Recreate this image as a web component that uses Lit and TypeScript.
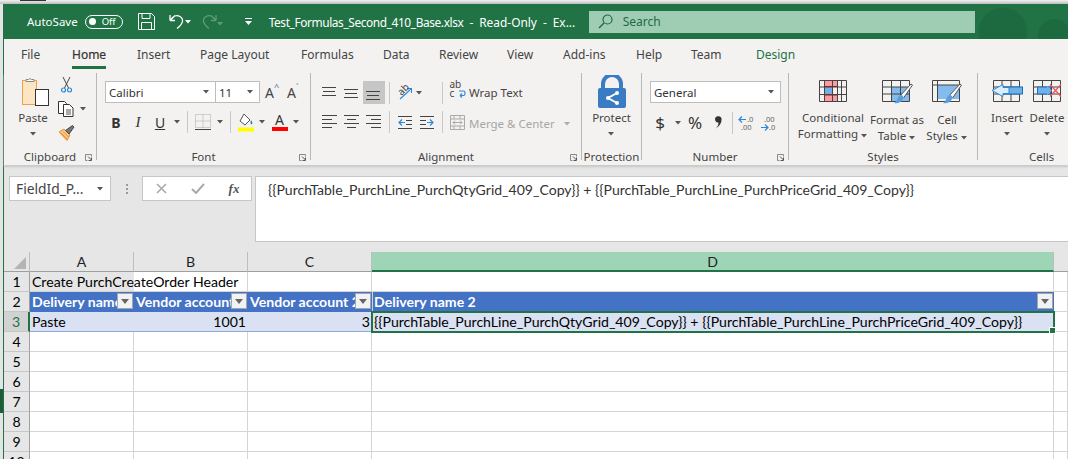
import { LitElement, html, css } from 'lit'
import { customElement } from 'lit/decorators.js'

const caret = html`<svg class="caret" width="7" height="4" viewBox="0 0 7 4"><path d="M0 0h6L3 3.5z" fill="#555" /></svg>`
const launcher = html`<svg class="launcher" width="8" height="7" viewBox="0 0 8 7"><path d="M.5 .5h6v2M.5 .5v6h2" fill="none" stroke="#888" /><path d="M3 2.5l3.5 3.5M6.5 3.5v3h-3" fill="none" stroke="#555" /></svg>`
const sep = html`<span class="vsep"></span>`

const alignLines = (rows: number[][], y0: number) => html`<svg width="16" height="14" viewBox="0 0 16 14">
  ${rows.map(
    (r, i) => html`<svg><rect x=${r[0]} y=${y0 + i * 4} width=${r[1]} height="1" fill="#444" /></svg>`
  )}
</svg>`

// tab name and the x where its text starts, relative to the strip
const tabs: [string, number][] = [
  ['File', 17],
  ['Home', 68],
  ['Insert', 133],
  ['Page Layout', 196],
  ['Formulas', 297],
  ['Data', 379],
  ['Review', 435],
  ['View', 503],
  ['Add-ins', 559],
  ['Help', 632],
  ['Team', 687],
  ['Design', 752],
  ['', 800],
]

const icons = {
  save: html`<svg width="17" height="17" viewBox="0 0 17 17"><path d="M.5 .5h13l3 3v13H.5zM4 .5v5h8v-5M3.5 16.5v-7h10v7" fill="none" stroke="#fff" /></svg>`,
  undo: html`<svg width="16" height="17" viewBox="0 0 16 17"><path d="M1 7.500l5-5M1 7.500h5M1 2v5.500M1.500 7C4 2.500 8 2 11 3.500c4 2.500 3.500 7-3 12" fill="none" stroke="#fff" stroke-width="1.300" /></svg>`,
  redo: html`<svg width="16" height="17" viewBox="0 0 16 17"><path d="M15 7.500l-5-5M15 7.500h-5M15 2v5.500M14.500 7C12 2.500 8 2 5 3.500c-4 2.500-3.500 7 3 12" fill="none" stroke="#5f9b7b" stroke-width="1.300" /></svg>`,
  qat: html`<svg width="7" height="8" viewBox="0 0 7 8"><path d="M0 0h7v1H0zM0 3h7L3.500 7z" fill="#fff" /></svg>`,
  search: html`<svg width="15" height="15" viewBox="0 0 15 15"><circle cx="9.500" cy="5.500" r="4.500" fill="none" stroke="#1f6b42" stroke-width="1.200" /><path d="M6 9l-5 5" stroke="#1f6b42" stroke-width="1.400" /></svg>`,
  paste: html`<svg width="28" height="30" viewBox="0 0 28 30">
    <rect x=".5" y="3.500" width="14" height="24" fill="#fce5c2" stroke="#eda343" />
    <path d="M4 4.500V2.500h2.500a2 2 0 0 1 3 0h2.500v2z" fill="#fff" stroke="#888" />
    <rect x="13.500" y="12.500" width="13" height="16" fill="#fff" stroke="#333" />
  </svg>`,
  scissors: html`<svg width="11" height="16" viewBox="0 0 11 16">
    <path d="M2 0l5.500 11M9 0L3.500 11" stroke="#444" fill="none" />
    <circle cx="2.500" cy="13" r="2" fill="none" stroke="#2b88d8" stroke-width="1.200" />
    <circle cx="8.500" cy="13" r="2" fill="none" stroke="#2b88d8" stroke-width="1.200" />
  </svg>`,
  copy: html`<svg width="16" height="16" viewBox="0 0 16 16">
    <path d="M.5 .5h6l2 2v10H.5z" fill="#fff" stroke="#333" />
    <path d="M5.500 3.500h6l3.500 3.500v8.500H5.500z" fill="#fff" stroke="#333" />
    <path d="M8 9h5M8 11h5M8 13h5" stroke="#555" />
  </svg>`,
  brush: html`<svg width="17" height="16" viewBox="0 0 17 16">
    <path d="M1 7l5-3 6 6-3 5.500z" fill="#f8c78c" stroke="#e8912d" />
    <path d="M3 8l6 6M5 6.500l5.500 5.500" stroke="#e8912d" />
    <path d="M7.500 5.500l7-5 1.500 1.500-5 7z" fill="#777" stroke="#444" />
  </svg>`,
  borders: html`<svg width="16" height="16" viewBox="0 0 16 16">
    <path d="M.5 .5h15v13H.5zM8 .5v13M.5 7h15" fill="none" stroke="#aaa" stroke-dasharray="1 1" />
    <path d="M0 15.500h16" stroke="#444" />
  </svg>`,
  fill: html`<svg width="16" height="19" viewBox="0 0 16 19">
    <path d="M6 1l6 6-5 5-5-4z" fill="#fff" stroke="#555" />
    <path d="M13 7c1 2 2 3 1 4s-2-1-1-4z" fill="#2b6fb5" />
    <rect y="14.500" width="16" height="4" fill="#ffff00" />
  </svg>`,
  orient: html`<svg width="16" height="16" viewBox="0 0 16 16">
    <path d="M1 13l11-10M8 2.500h4.500V7" fill="none" stroke="#2b88d8" stroke-width="1.100" transform="translate(3 1)" />
  </svg>`,
  wrap: html`<svg width="16" height="17" viewBox="0 0 16 17">
    <path d="M10 12.500h3.500c2 0 2-4.500 0-4.500H9M10 12.500l2-2M10 12.500l2 2" fill="none" stroke="#2b88d8" stroke-width="1.100" />
  </svg>`,
  indentL: html`<svg width="14" height="13" viewBox="0 0 14 13"><path d="M0 .5h14M8 4.500h6M8 8.500h6M0 12.500h14" stroke="#444" /><path d="M1 6.500h6M4 3.500l-3 3 3 3" fill="none" stroke="#2b88d8" stroke-width="1.200" /></svg>`,
  indentR: html`<svg width="14" height="13" viewBox="0 0 14 13"><path d="M0 .5h14M0 4.500h6M0 8.500h6M0 12.500h14" stroke="#444" /><path d="M7 6.500h6M10 3.500l3 3-3 3" fill="none" stroke="#2b88d8" stroke-width="1.200" /></svg>`,
  merge: html`<svg width="15" height="15" viewBox="0 0 15 15">
    <path d="M.5 .5h14v14H.5zM.5 4h14M.5 11h14M4 .5V4M10 .5V4M4 11v3.500M10 11v3.500" fill="none" stroke="#aaa" />
    <path d="M3 7.500h9M5 5.500l-2 2 2 2M10 5.500l2 2-2 2" fill="none" stroke="#aaa" />
  </svg>`,
  lock: html`<svg width="28" height="33" viewBox="0 0 28 33">
    <path d="M5 14V9a9 9 0 0 1 18 0v5" fill="none" stroke="#3a7cc3" stroke-width="4" />
    <rect y="13" width="28" height="20" rx="2" fill="#3a7cc3" />
    <path d="M19 18l-9 5 9 5" fill="none" stroke="#fff" stroke-width="2" />
    <circle cx="19" cy="18" r="2" fill="#fff" /><circle cx="10" cy="23" r="2" fill="#fff" /><circle cx="19" cy="28" r="2" fill="#fff" />
  </svg>`,
  comma: html`<svg width="9" height="13" viewBox="0 0 9 13"><path d="M1 3a3.200 3.200 0 1 1 6.500 1c0 3-2 6-5.500 8.500C4 10 4.500 8 4.500 6.500 2.500 7 1 5 1 3z" fill="#333" /></svg>`,
  incDec: html`<svg class="dec" width="18" height="16" viewBox="0 0 18 16">
    <path d="M1 4.500h7M4 1.500l-3 3 3 3" fill="none" stroke="#2b88d8" stroke-width="1.200" />
    <text x="9" y="7">.0</text><text x="3" y="15">.00</text>
  </svg>`,
  decInc: html`<svg class="dec" width="18" height="16" viewBox="0 0 18 16">
    <path d="M8 12.500H1M5 9.500l3 3-3 3" fill="none" stroke="#2b88d8" stroke-width="1.200" />
    <text x="4" y="7">.00</text><text x="9" y="15">.0</text>
  </svg>`,
  cond: html`<svg width="28" height="22" viewBox="0 0 28 22">
    <path d="M5.500 .5h13v6h-13zM5.500 15h13v6.500h-13z" fill="#ff9a9f" stroke="#c00" />
    <rect x="5.500" y="7" width="8" height="8" fill="#6fb1e8" />
    <path d="M.5 .5h27v21H.5zM.5 7h27M.5 14.500h27M5.500 .5v21M13.500 .5v21M18.500 .5v21M22.500 .5v21" fill="none" stroke="#444" />
  </svg>`,
  table: html`<svg width="31" height="24" viewBox="0 0 31 24">
    <rect x="9.500" y="7" width="18" height="14" fill="#85bbec" />
    <path d="M.5 .5h27v21H.5zM.5 7h27M.5 14h27M9.500 .5v21M18.500 .5v21" fill="none" stroke="#444" />
    <path d="M18 16L29 4l1.500 1-9 13" fill="#fff" stroke="#555" />
    <path d="M18 15c3 0 4 2 3 4-2 4-6 5-9 4 3-1 3-6 6-8z" fill="#5a9fdc" />
  </svg>`,
  cell: html`<svg width="31" height="24" viewBox="0 0 31 24">
    <rect x="5.500" y="5" width="22" height="14" fill="#85bbec" />
    <path d="M.5 .5h27v21H.5zM.5 5h27M5.500 .5v21" fill="none" stroke="#444" />
    <path d="M17 16L28 4l1.500 1-9 13" fill="#fff" stroke="#555" />
    <path d="M17 15c3 0 4 2 3 4-2 4-6 5-9 4 3-1 3-6 6-8z" fill="#5a9fdc" />
  </svg>`,
  insert: html`<svg width="32" height="22" viewBox="0 0 32 22">
    <path d="M2.500 .5h26v21h-26zM2.500 7h26M2.500 14h26M11 .5v21M20 .5v21" fill="none" stroke="#444" />
    <rect x="12" y="7" width="19.500" height="7" fill="#6fb1e8" stroke="#1b6fc0" />
    <path d="M12 4.500L1 10.500l11 6v-3h6v-6h-6z" fill="#dcecfb" stroke="#2b88d8" />
  </svg>`,
  del: html`<svg width="29" height="22" viewBox="0 0 29 22">
    <path d="M.5 .5h27v21H.5zM.5 7h27M.5 14h27M9.500 .5v21M18.500 .5v21" fill="none" stroke="#444" />
    <rect x="4.500" y="7" width="13" height="7" fill="#6fb1e8" stroke="#1b6fc0" />
    <path d="M14 6l5 4.500-5 4.500z" fill="#6fb1e8" />
    <path d="M17 4.500l11 12M28 4.500l-11 12" stroke="#f0555a" stroke-width="1.300" />
  </svg>`,
  x: html`<svg width="11" height="11" viewBox="0 0 11 11"><path d="M1 1l9 9M10 1l-9 9" stroke="#aaa" stroke-width="1.600" /></svg>`,
  check: html`<svg width="14" height="11" viewBox="0 0 14 11"><path d="M1 6l4 4 8-9" fill="none" stroke="#aaa" stroke-width="2" /></svg>`,
}

@customElement('app-root')
export class AppRoot extends LitElement {
  static styles = css`
    :host {
      display: block;
      width: 1068px;
      height: 459px;
      overflow: hidden;
      position: relative;
      box-sizing: border-box;
      padding: 4px 0 0 3px;
      background: linear-gradient(#f2f2f2, #bdbdbd 4px, #e4e4e4 4px);
      font-family: 'Noto Sans', sans-serif;
      font-size: 11.5px;
      color: #444;
    }
    .strip {
      position: absolute;
      left: 0;
      top: 389px;
      width: 3px;
      height: 24px;
      background: #1f5c3a;
    }
    .behind {
      position: absolute;
      left: 20px;
      top: 0;
      width: 26px;
      height: 1px;
      background: #333;
    }
    .window {
      height: 455px;
      border-left: 1px solid #217346;
      background: #e6e6e6;
    }

    .titlebar {
      height: 35px;
      background: #217346;
      color: #fff;
      display: flex;
      align-items: center;
      padding-left: 23px;
      font-size: 11.5px;
    }
    .toggle {
      width: 38px;
      height: 14px;
      border: 1px solid #fff;
      border-radius: 8px;
      margin-left: 7px;
      display: flex;
      align-items: center;
      box-sizing: border-box;
      padding-left: 3px;
      font-size: 9.500px;
      gap: 6px;
    }
    .knob {
      width: 7px;
      height: 7px;
      border-radius: 50%;
      background: #fff;
    }
    .qat {
      display: grid;
      grid-template-columns: 17px 14px 16px 4px 12px 16px 4px 24px 7px;
      align-items: center;
      margin-left: 15px;
      justify-items: start;
    }
    .qat .caret path {
      fill: #fff;
    }
    .qat .dim .caret path {
      fill: #5f9b7b;
    }
    .doc {
      margin-left: 17px;
      width: 320px;
      white-space: nowrap;
      font-size: 11.900px;
    }
    .docname {
      letter-spacing: -0.4px;
    }
    .dash {
      margin: 0 6px;
    }
    .search {
      width: 386px;
      height: 22px;
      background: #9fcdb3;
      color: #1f6b42;
      display: flex;
      align-items: center;
      gap: 10px;
      padding-left: 9px;
      box-sizing: border-box;
      font-size: 12px;
    }
    .titlefill {
      flex: 1;
      align-self: stretch;
      background: radial-gradient(circle at 30% 80%, #1e6a40 0 24px, transparent 25px),
        radial-gradient(circle at 85% 90%, #1e6a40 0 16px, transparent 17px);
    }

    .tabs {
      height: 34px;
      background: #f3f2f1;
      display: flex;
      align-items: flex-start;
      font-size: 12px;
    }
    .tabs .lead {
      width: 17px;
    }
    .tab {
      height: 30px;
      line-height: 32px;
      white-space: nowrap;
      flex: none;
    }
    .tab b {
      display: inline-block;
      height: 27px;
      font-weight: 400;
    }
    .tab.on b {
      color: #333;
      -webkit-text-stroke: 0.2px #333;
      border-bottom: 3px solid #217346;
    }
    .tab.design {
      color: #217346;
    }

    .ribbon {
      height: 92px;
      background: #f3f2f1;
      display: flex;
      padding-bottom: 5px;
      box-sizing: border-box;
      box-shadow: 0 2px 2px #c8c8c8;
      position: relative;
    }
    .group {
      position: relative;
      display: flex;
      flex-direction: column;
      box-sizing: border-box;
      border-right: 1px solid #b8b8b8;
      flex: none;
    }
    .group:last-child {
      border-right: none;
      flex: 1;
    }
    .body {
      flex: 1;
      min-height: 0;
    }
    .label {
      height: 11px;
      line-height: 16px;
      text-align: center;
      white-space: nowrap;
    }
    .launcher {
      position: absolute;
      right: 3px;
      bottom: -1px;
    }
    .clipboard {
      width: 93px;
    }
    .font {
      width: 214px;
    }
    .alignment {
      width: 271px;
    }
    .protection {
      width: 60px;
    }
    .number {
      width: 147px;
    }
    .styles {
      width: 189px;
    }

    .clipboard .body {
      display: flex;
      padding-left: 4px;
    }
    .big {
      display: flex;
      flex-direction: column;
      align-items: center;
      line-height: 16px;
      white-space: nowrap;
    }
    .big svg:first-child {
      flex: none;
    }
    .big .caret {
      margin-top: 6px;
    }
    .paste {
      width: 50px;
      padding-top: 4px;
    }
    .paste svg:first-child {
      margin-left: 5px;
    }
    .paste span {
      margin-top: 3px;
    }
    .small {
      display: grid;
      grid-template-rows: 24px 24px 24px;
      align-items: center;
    }
    .small div {
      display: flex;
      align-items: center;
      gap: 6px;
    }
    .small .cut {
      padding-left: 3px;
    }

    .rows {
      display: flex;
      flex-direction: column;
      gap: 8px;
      padding: 8px 0 0 8px;
    }
    .line {
      display: grid;
      height: 22px;
      align-items: center;
      justify-items: center;
    }
    .vsep {
      width: 1px;
      height: 22px;
      background: #c8c8c8;
    }
    .font-top {
      grid-template-columns: 111px 44px 22px 22px;
      justify-items: stretch;
    }
    .font-bottom {
      grid-template-columns: 22px 22px 22px 13px 6px 25px 10px 10px 22px 11px 23px 10px;
    }
    .box {
      height: 22px;
      box-sizing: border-box;
      border: 1px solid #bdbdbd;
      background: #fff;
      display: flex;
      align-items: center;
      justify-content: space-between;
      padding: 0 5px 0 3px;
      color: #333;
    }
    .box + .box {
      border-left: none;
    }
    .grow {
      font-size: 14px;
      padding-left: 5px;
      position: relative;
    }
    .grow sup {
      position: absolute;
      top: -3px;
      font-size: 9px;
      color: #2b6fb5;
    }
    .b {
      font-weight: 700;
      font-size: 14px;
      color: #333;
    }
    .i {
      font-style: italic;
      font-family: 'Liberation Serif', serif;
      font-size: 15px;
      color: #333;
    }
    .u {
      text-decoration: underline;
      font-size: 14px;
      color: #333;
    }
    .color-a {
      width: 16px;
      text-align: center;
      font-size: 14px;
      line-height: 14px;
      border-bottom: 4px solid #ff0000;
      color: #333;
    }

    .align-line {
      grid-template-columns: 22px 22px 22px 8px 23px 22px 8px 23px auto;
    }
    .align-line .on {
      width: 22px;
      height: 23px;
      background: #c6c6c6;
      display: flex;
      align-items: center;
      justify-content: center;
    }
    .orient {
      grid-column: 5 / 7;
      display: flex;
      align-items: center;
      gap: 4px;
      justify-self: start;
      padding-left: 3px;
      position: relative;
    }
    .orient b {
      position: absolute;
      left: 4px;
      top: -3px;
      font-weight: 400;
      font-size: 10px;
      transform: rotate(-45deg);
    }
    .wraptext {
      position: relative;
    }
    .wraptext b {
      position: absolute;
      left: 0;
      top: -3px;
      width: 12px;
      font-weight: 400;
      font-size: 10px;
      line-height: 9px;
      white-space: normal;
    }
    .label-text {
      justify-self: start;
      white-space: nowrap;
    }
    .off {
      color: #a6a6a6;
      display: flex;
      align-items: center;
      gap: 9px;
      padding-top: 3px;
    }
    .off .caret path {
      fill: #aaa;
    }

    .protection .big {
      padding-top: 2px;
    }
    .protection .big span {
      margin-top: 2px;
    }
    .number .line {
      justify-items: start;
    }
    .numbox {
      width: 131px;
    }
    .num-line {
      grid-template-columns: 20px 16px 18px 28px 1px 28px 16px;
      width: 131px;
    }
    .number .num-line > * {
      justify-self: center;
    }
    .dec {
      font-size: 7.500px;
      fill: #666;
      overflow: visible;
    }
    .dollar,
    .pct {
      font-size: 17px;
      color: #333;
    }
    .styles .body {
      display: grid;
      grid-template-columns: 72px 56px 44px;
      padding: 7px 0 0 8px;
    }
    .styles .big span:first-of-type,
    .cells .big span:first-of-type {
      margin-top: 8px;
    }
    .cells .body {
      display: grid;
      grid-template-columns: 36px 44px;
      padding: 7px 0 0 11px;
    }
    .cells .label {
      padding-left: 51px;
      text-align: left;
    }

    .formula {
      height: 87px;
      padding: 11px 0 0 5px;
      display: flex;
      box-sizing: border-box;
      align-items: flex-start;
      background: #e6e6e6;
    }
    .fbox {
      background: #fff;
      border: 1px solid #c6c6c6;
      box-sizing: border-box;
      height: 25px;
      display: flex;
      align-items: center;
    }
    .name {
      width: 102px;
      padding: 0 6px;
      justify-content: space-between;
      font-size: 13.800px;
      white-space: nowrap;
    }
    .dots {
      width: 31px;
      height: 25px;
      display: flex;
      flex-direction: column;
      align-items: center;
      justify-content: center;
      gap: 2px;
    }
    .dots i {
      width: 2px;
      height: 2px;
      background: #9a9a9a;
    }
    .fn {
      width: 110px;
      display: grid;
      grid-template-columns: 37px 36px 36px;
      justify-items: center;
    }
    .fx {
      font-family: 'Liberation Serif', serif;
      font-style: italic;
      font-weight: 700;
      font-size: 13px;
      color: #555;
    }
    .fx-text {
      margin-left: 3px;
      flex: 1;
      height: 66px;
      background: #fff;
      border: 1px solid #c6c6c6;
      border-right: none;
      box-sizing: border-box;
      font-family: Lato, sans-serif;
      font-size: 14.050px;
      line-height: 26px;
      padding-left: 12px;
      color: #333;
      white-space: nowrap;
      overflow: hidden;
    }

    .sheet {
      position: relative;
      font-family: Lato, sans-serif;
      font-size: 14.100px;
      color: #000;
    }
    .row {
      display: grid;
      grid-template-columns: 26px 104px 114px 124px 682px 1fr;
      grid-template-rows: 20px;
      height: 20px;
    }
    .row > div {
      box-sizing: border-box;
      height: 20px;
      border-right: 1px solid #d4d4d4;
      border-bottom: 1px solid #d4d4d4;
      background: #fff;
      line-height: 19px;
      padding: 0 2px;
      white-space: nowrap;
      position: relative;
      min-width: 0;
    }
    .row > .rh {
      background: #e6e6e6;
      border-right: 1px solid #9f9f9f;
      border-bottom: 1px solid #c6c6c6;
      text-align: center;
      padding: 0;
    }
    .row > .rh.cur {
      background: #d2d2d2;
      color: #217346;
      border-right: 2px solid #217346;
    }
    .heads > div {
      background: #e6e6e6;
      border-right: 1px solid #bdbdbd;
      border-bottom: 1px solid #9f9f9f;
      text-align: center;
      color: #222;
    }
    .heads > .corner {
      position: relative;
    }
    .corner svg {
      position: absolute;
      left: 10px;
      top: 5px;
    }
    .heads > .cur {
      background: #9fd5b7;
      border-bottom: 2px solid #217346;
      border-right: 1px solid #bdbdbd;
    }
    .heads > .rest {
      border-right: none;
    }
    .row > .noline {
      border-right: none;
      z-index: 1;
      background: transparent;
    }
    .row > .tb {
      background: #4472c4;
      border-right: none;
      border-bottom: 1px solid #4472c4;
      color: #fff;
      font-weight: 700;
      overflow: hidden;
    }
    .row > .tb.first-d {
      border-left: 1px solid #d4d4d4;
      padding-left: 1px;
    }
    .row > .td {
      background: #d9e1f2;
      border-right: none;
      border-bottom: 1px solid #8ea9db;
    }
    .row > .num {
      text-align: right;
      padding-right: 2px;
    }
    .filter {
      position: absolute;
      right: 1px;
      top: 1px;
      width: 16px;
      height: 16px;
      box-sizing: border-box;
      background: #f2f2f2;
      border: 1px solid #a6a6a6;
      display: flex;
      align-items: center;
      justify-content: center;
    }
    .selection {
      position: absolute;
      left: 367px;
      top: 59px;
      width: 684px;
      height: 22px;
      box-sizing: border-box;
      border: 2px solid #217346;
      pointer-events: none;
      z-index: 2;
    }
    .handle {
      position: absolute;
      right: -3px;
      bottom: -3px;
      width: 5px;
      height: 5px;
      background: #217346;
      border: 1px solid #fff;
    }
  `

  private filter() {
    return html`<span class="filter"><svg width="8" height="5" viewBox="0 0 8 5"><path d="M0 0h8L4 5z" fill="#666" /></svg></span>`
  }

  private titlebar() {
    return html`<div class="titlebar">
      <span>AutoSave</span>
      <span class="toggle"><i class="knob"></i>Off</span>
      <div class="qat">
        ${icons.save}<span></span>${icons.undo}${caret}<span></span>${icons.redo}<span class="dim">${caret}</span><span></span>${icons.qat}
      </div>
      <span class="doc"><span class="docname">Test_Formulas_Second_410_Base.xlsx</span><span class="dash">-</span>Read-Only<span class="dash">-</span>Ex...</span>
      <div class="search">${icons.search}<span>Search</span></div>
      <div class="titlefill"></div>
    </div>`
  }

  private tabStrip() {
    return html`<div class="tabs">
      <span class="lead"></span>
      ${tabs.slice(0, -1).map(
        ([name, x], i) =>
          html`<span class="tab ${name === 'Home' ? 'on' : ''} ${name === 'Design' ? 'design' : ''}" style="width:${tabs[i + 1][1] - x}px"><b>${name}</b></span>`
      )}
    </div>`
  }

  private clipboard() {
    return html`<div class="group clipboard">
      <div class="body">
        <div class="big paste">${icons.paste}<span>Paste</span>${caret}</div>
        <div class="small">
          <div class="cut">${icons.scissors}</div>
          <div>${icons.copy}${caret}</div>
          <div>${icons.brush}</div>
        </div>
      </div>
      <div class="label">Clipboard</div>
      ${launcher}
    </div>`
  }

  private font() {
    return html`<div class="group font">
      <div class="body rows">
        <div class="line font-top">
          <div class="box">Calibri${caret}</div>
          <div class="box">11${caret}</div>
          <span class="grow">A<sup>^</sup></span>
          <span class="grow">A<sup>˅</sup></span>
        </div>
        <div class="line font-bottom">
          <span class="b">B</span><span class="i">I</span><span class="u">U</span>${caret}${sep}${icons.borders}${caret}${sep}${icons.fill}${caret}
          <span class="color-a">A</span>${caret}
        </div>
      </div>
      <div class="label">Font</div>
      ${launcher}
    </div>`
  }

  private alignment() {
    const top = [
      [0, 14],
      [1, 12],
      [0, 14],
    ]
    const left = [
      [0, 15],
      [0, 10],
      [0, 15],
      [0, 10],
    ]
    const mid = [
      [0, 15],
      [3, 9],
      [0, 15],
      [3, 9],
    ]
    const right = [
      [0, 15],
      [5, 10],
      [0, 15],
      [5, 10],
    ]
    return html`<div class="group alignment">
      <div class="body rows">
        <div class="line align-line">
          ${alignLines(top, 1)}${alignLines(top, 3)}
          <span class="on">${alignLines(top, 5)}</span>
          ${sep}
          <span class="orient">${icons.orient}<b>ab</b>${caret}</span>
          ${sep}
          <span class="wraptext">${icons.wrap}<b>ab c</b></span>
          <span class="label-text">Wrap Text</span>
        </div>
        <div class="line align-line">
          ${alignLines(left, 0)}${alignLines(mid, 0)}${alignLines(right, 0)}
          ${sep}${icons.indentL}${icons.indentR}${sep}${icons.merge}
          <span class="label-text off">Merge &amp; Center ${caret}</span>
        </div>
      </div>
      <div class="label">Alignment</div>
      ${launcher}
    </div>`
  }

  private protection() {
    return html`<div class="group protection">
      <div class="body">
        <div class="big">${icons.lock}<span>Protect</span>${caret}</div>
      </div>
      <div class="label">Protection</div>
    </div>`
  }

  private number() {
    return html`<div class="group number">
      <div class="body rows">
        <div class="line"><div class="box numbox">General${caret}</div></div>
        <div class="line num-line">
          <span class="dollar">$</span>${caret}<span class="pct">%</span>${icons.comma}${sep}${icons.incDec}${icons.decInc}
        </div>
      </div>
      <div class="label">Number</div>
      ${launcher}
    </div>`
  }

  private styleGroup() {
    return html`<div class="group styles">
      <div class="body">
        <div class="big">${icons.cond}<span>Conditional</span><span>Formatting ${caret}</span></div>
        <div class="big">${icons.table}<span>Format as</span><span>Table ${caret}</span></div>
        <div class="big">${icons.cell}<span>Cell</span><span>Styles ${caret}</span></div>
      </div>
      <div class="label">Styles</div>
    </div>`
  }

  private cells() {
    return html`<div class="group cells">
      <div class="body">
        <div class="big">${icons.insert}<span>Insert</span>${caret}</div>
        <div class="big">${icons.del}<span>Delete</span>${caret}</div>
      </div>
      <div class="label">Cells</div>
    </div>`
  }

  private formulaBar() {
    return html`<div class="formula">
      <div class="fbox name"><span>FieldId_P...</span>${caret}</div>
      <div class="dots"><i></i><i></i><i></i></div>
      <div class="fbox fn">${icons.x}${icons.check}<span class="fx">fx</span></div>
      <div class="fx-text">{{PurchTable_PurchLine_PurchQtyGrid_409_Copy}} + {{PurchTable_PurchLine_PurchPriceGrid_409_Copy}}</div>
    </div>`
  }

  private sheet() {
    const blank = [4, 5, 6, 7, 8, 9, 10]
    return html`<div class="sheet">
      <div class="row heads">
        <div class="corner"><svg width="12" height="12" viewBox="0 0 12 12"><path d="M12 0v12H0z" fill="#b4b4b4" /></svg></div>
        <div>A</div><div>B</div><div>C</div><div class="cur">D</div><div class="rest"></div>
      </div>
      <div class="row">
        <div class="rh">1</div>
        <div class="noline">Create PurchCreateOrder Header</div>
        <div></div><div></div><div></div><div></div>
      </div>
      <div class="row">
        <div class="rh">2</div>
        <div class="tb">Delivery name${this.filter()}</div>
        <div class="tb">Vendor account${this.filter()}</div>
        <div class="tb">Vendor account 2${this.filter()}</div>
        <div class="tb first-d">Delivery name 2${this.filter()}</div>
        <div></div>
      </div>
      <div class="row">
        <div class="rh cur">3</div>
        <div class="td">Paste</div>
        <div class="td num">1001</div>
        <div class="td num">3</div>
        <div class="td">{{PurchTable_PurchLine_PurchQtyGrid_409_Copy}} + {{PurchTable_PurchLine_PurchPriceGrid_409_Copy}}</div>
        <div></div>
      </div>
      ${blank.map(
        (n) => html`<div class="row"><div class="rh">${n}</div><div></div><div></div><div></div><div></div><div></div></div>`
      )}
      <div class="selection"><i class="handle"></i></div>
    </div>`
  }

  render() {
    return html`
      <div class="strip"></div>
      <div class="behind"></div>
      <div class="window">
        ${this.titlebar()} ${this.tabStrip()}
        <div class="ribbon">
          ${this.clipboard()} ${this.font()} ${this.alignment()} ${this.protection()} ${this.number()} ${this.styleGroup()} ${this.cells()}
        </div>
        ${this.formulaBar()} ${this.sheet()}
      </div>
    `
  }
}
